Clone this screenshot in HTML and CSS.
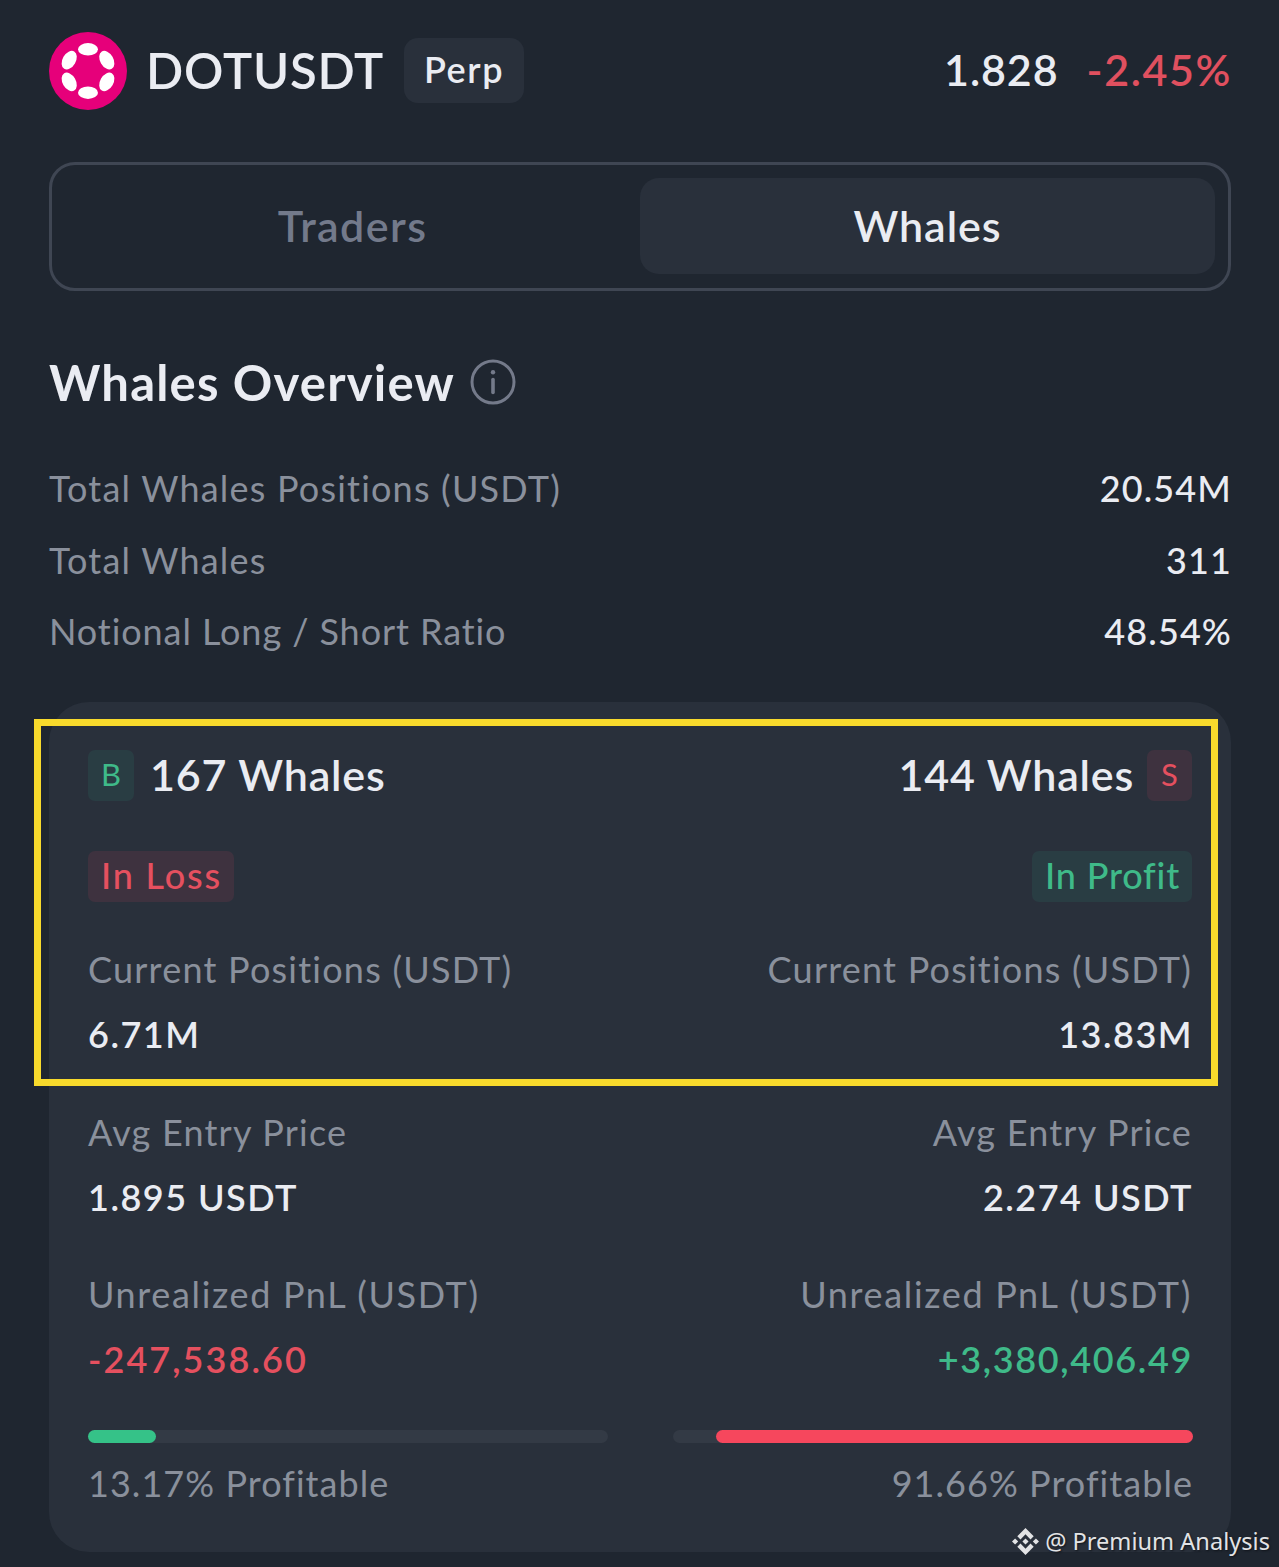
FILE: index.html
```html
<!DOCTYPE html>
<html lang="en">
<head>
<meta charset="utf-8">
<title>DOTUSDT Perp – Whales</title>
<link rel="stylesheet" href="styles.css">
</head>
<body>
<main class="screen">
  <header class="header">
    <svg class="coin" viewBox="-39 -39 78 78" aria-hidden="true">
      <circle r="39" fill="#e6007a"/>
      <g fill="#fff">
        <ellipse cy="-21.7" rx="10" ry="6.2"/>
        <ellipse cy="-21.7" rx="10" ry="6.6" transform="rotate(60)"/>
        <ellipse cy="-21.7" rx="10" ry="6.6" transform="rotate(120)"/>
        <ellipse cy="-21.7" rx="10" ry="6.2" transform="rotate(180)"/>
        <ellipse cy="-21.7" rx="10" ry="6.6" transform="rotate(240)"/>
        <ellipse cy="-21.7" rx="10" ry="6.6" transform="rotate(300)"/>
      </g>
    </svg>
    <h1 class="symbol">DOTUSDT</h1>
    <span class="perp">Perp</span>
    <span class="price">1.828</span>
    <span class="change">-2.45%</span>
  </header>

  <nav class="tabs">
    <a class="tab">Traders</a>
    <a class="tab tab-active">Whales</a>
  </nav>

  <section class="overview">
    <div class="title-row">
      <h2 class="title">Whales Overview</h2>
      <svg class="info" viewBox="0 0 46 46" aria-hidden="true">
        <circle cx="23" cy="23" r="21" fill="none" stroke="#747a8a" stroke-width="3"/>
        <circle cx="23" cy="13.3" r="2.2" fill="#747a8a"/>
        <path d="M23 20.5V33.5" stroke="#747a8a" stroke-width="3.6" stroke-linecap="round"/>
      </svg>
    </div>
    <dl class="stats">
      <div class="stat"><dt class="stat-label">Total Whales Positions (USDT)</dt><dd class="stat-value">20.54M</dd></div>
      <div class="stat"><dt class="stat-label">Total Whales</dt><dd class="stat-value">311</dd></div>
      <div class="stat"><dt class="stat-label ratio">Notional Long / Short Ratio</dt><dd class="stat-value">48.54%</dd></div>
    </dl>
  </section>

  <section class="card">
    <div class="side">
      <div class="side-head"><span class="badge buy">B</span><span class="count">167 Whales</span></div>
      <span class="status loss">In Loss</span>
      <div class="metric"><span class="label">Current Positions (USDT)</span><span class="value">6.71M</span></div>
      <div class="metric entry"><span class="label">Avg Entry Price</span><span class="value">1.895 USDT</span></div>
      <div class="metric unrealized"><span class="label">Unrealized PnL (USDT)</span><span class="value pnl negative">-247,538.60</span></div>
      <div class="bar"><div class="fill fill-buy" style="width:13.17%"></div></div>
      <span class="profitable">13.17% Profitable</span>
    </div>
    <div class="side side-right">
      <div class="side-head"><span class="count">144 Whales</span><span class="badge sell">S</span></div>
      <span class="status profit">In Profit</span>
      <div class="metric"><span class="label">Current Positions (USDT)</span><span class="value">13.83M</span></div>
      <div class="metric entry"><span class="label">Avg Entry Price</span><span class="value">2.274 USDT</span></div>
      <div class="metric unrealized"><span class="label">Unrealized PnL (USDT)</span><span class="value pnl positive">+3,380,406.49</span></div>
      <div class="bar"><div class="fill fill-sell" style="width:91.66%"></div></div>
      <span class="profitable">91.66% Profitable</span>
    </div>
  </section>

  <div class="highlight"></div>
  <div class="watermark">
    <svg class="mark" viewBox="0 0 28 28" aria-hidden="true">
      <g fill="#e2e3e5">
        <path d="M14 0L22.5 8.5L19.2 11.8L14 6.6L8.8 11.8L5.5 8.5Z"/>
        <path d="M14 28L22.5 19.5L19.2 16.2L14 21.4L8.8 16.2L5.5 19.5Z"/>
        <path d="M3.2 10.8L6.4 14L3.2 17.2L0 14ZM24.8 10.8L28 14L24.8 17.2L21.6 14ZM14 10.8L17.2 14L14 17.2L10.8 14Z"/>
      </g>
    </svg>
    <span>@ Premium Analysis</span>
  </div>
</main>
</body>
</html>
```
FILE: styles.css
```css
* { box-sizing: border-box; }

body {
  margin: 0;
  background: #1f2630;
  color: #eaecf2;
  font-family: Lato, "Liberation Sans", sans-serif;
}

h1, h2, dl, dd { margin: 0; }

.screen {
  position: relative;
  height: 1567px;
  padding: 32px 48px 0 49px;
  overflow: hidden;
}

.header {
  display: flex;
  align-items: center;
  height: 78px;
  white-space: nowrap;
}
.coin { width: 78px; height: 78px; flex: none; }
.symbol {
  margin-left: 19px;
  width: 258px;
  font-size: 49px;
  font-weight: 600;
  line-height: 76px;
  padding-bottom: 2px;
  letter-spacing: 0.8px;
}
.perp {
  width: 120px;
  height: 65px;
  margin-bottom: 1px;
  border-radius: 14px;
  background: #29303b;
  font-size: 36px;
  font-weight: 600;
  line-height: 62px;
  text-align: center;
  letter-spacing: 1.6px;
}
.price {
  margin-left: auto;
  padding-bottom: 2px;
  font-size: 43px;
  font-weight: 600;
  line-height: 76px;
  letter-spacing: 0.9px;
}
.change {
  margin-left: 28px;
  margin-right: -1px;
  padding-bottom: 2px;
  color: #e0505f;
  font-size: 43px;
  font-weight: 600;
  line-height: 76px;
  letter-spacing: 1.6px;
}

.tabs {
  display: grid;
  grid-template-columns: 1fr 1fr;
  height: 129px;
  margin-top: 52px;
  padding: 13px 13px 14px 13px;
  border: 3px solid #3f4653;
  border-radius: 26px;
}
.tab {
  border-radius: 19px;
  color: #737a8b;
  font-size: 43px;
  font-weight: 600;
  line-height: 95px;
  text-align: center;
  letter-spacing: 1.4px;
}
.tab-active {
  background: #29303b;
  color: #eaecf2;
  letter-spacing: 0.9px;
}

.title-row {
  display: flex;
  align-items: center;
  height: 60px;
  margin-top: 61px;
  gap: 15px;
}
.title {
  font-size: 49px;
  font-weight: 700;
  line-height: 60px;
  white-space: nowrap;
  letter-spacing: 1.2px;
}
.info { width: 46px; height: 46px; }

.stats { margin-top: 41px; }
.stat {
  display: flex;
  justify-content: space-between;
  height: 71.5px;
  font-size: 36px;
  line-height: 71px;
  white-space: nowrap;
}
.stat-label { color: #8a909c; letter-spacing: 1.2px; }
.ratio { letter-spacing: 0.92px; }
.stat-value { margin-right: -1px; font-weight: 500; letter-spacing: 1.1px; }

.card {
  display: grid;
  grid-template-columns: 1fr 1fr;
  column-gap: 65px;
  width: 1182px;
  height: 850px;
  margin-top: 34px;
  padding: 48px 38px 0 39px;
  border-radius: 40px;
  background: #29303b;
}
.side {
  display: flex;
  flex-direction: column;
  align-items: flex-start;
  white-space: nowrap;
}
.side-right { align-items: flex-end; }
.side-head {
  display: flex;
  align-items: center;
  height: 51px;
}
.badge {
  width: 46px;
  height: 51px;
  border-radius: 7px;
  font-size: 31px;
  line-height: 49px;
  text-align: center;
}
.buy, .profit { background: #293d43; color: #3fba89; }
.sell, .loss { background: #3e323f; color: #e5505f; }
.sell { width: 45px; margin-right: 1px; }
.count {
  margin: 0 13px 0 16px;
  font-size: 43px;
  font-weight: 600;
  line-height: 50px;
  letter-spacing: 0.8px;
}
.status {
  height: 51px;
  margin-top: 50px;
  padding: 0 12px 0 13px;
  border-radius: 7px;
  font-size: 36px;
  font-weight: 500;
  line-height: 49px;
  letter-spacing: 1.8px;
}
.profit { margin-right: 1px; letter-spacing: 0.8px; }
.metric {
  display: flex;
  flex-direction: column;
  align-items: inherit;
  margin-top: 35px;
}
.side-right .metric { margin-right: 1px; }
.entry { margin-top: 33.5px; }
.unrealized { margin-top: 31.5px; }
.label, .value {
  height: 65px;
  font-size: 36px;
  line-height: 65px;
}
.label { color: #8a909c; letter-spacing: 1.22px; }
.unrealized .label { letter-spacing: 1.65px; }
.value { font-weight: 600; letter-spacing: 1.5px; }
.side-right .value { margin-right: -1px; }
.negative { color: #e5505f; letter-spacing: 2.05px; }
.side-right .positive { color: #3fba89; letter-spacing: 1.65px; }
.bar {
  display: flex;
  width: 520px;
  height: 13px;
  margin-top: 38px;
  border-radius: 7px;
  background: #333a45;
}
.side-right .bar { justify-content: flex-end; }
.fill { border-radius: 7px; }
.fill-buy { background: #35c288; }
.fill-sell { background: #f6475d; }
.profitable {
  margin-top: 8px;
  color: #8a909c;
  font-size: 36px;
  line-height: 65px;
  letter-spacing: 1.05px;
}

/* Call-out frame drawn over the top of the card */
.highlight {
  position: absolute;
  left: 34px;
  top: 719px;
  width: 1184px;
  height: 367px;
  border: 7px solid #f8da2c;
}

.watermark {
  position: absolute;
  right: 9px;
  top: 1526px;
  display: flex;
  align-items: center;
  gap: 6px;
  height: 30px;
  color: #e2e3e5;
  font: 23.6px/30px "Noto Sans", "Open Sans", sans-serif;
  white-space: nowrap;
  text-shadow: 1px 1px 2px #10141a;
}
.mark { width: 27px; height: 27px; }
```
